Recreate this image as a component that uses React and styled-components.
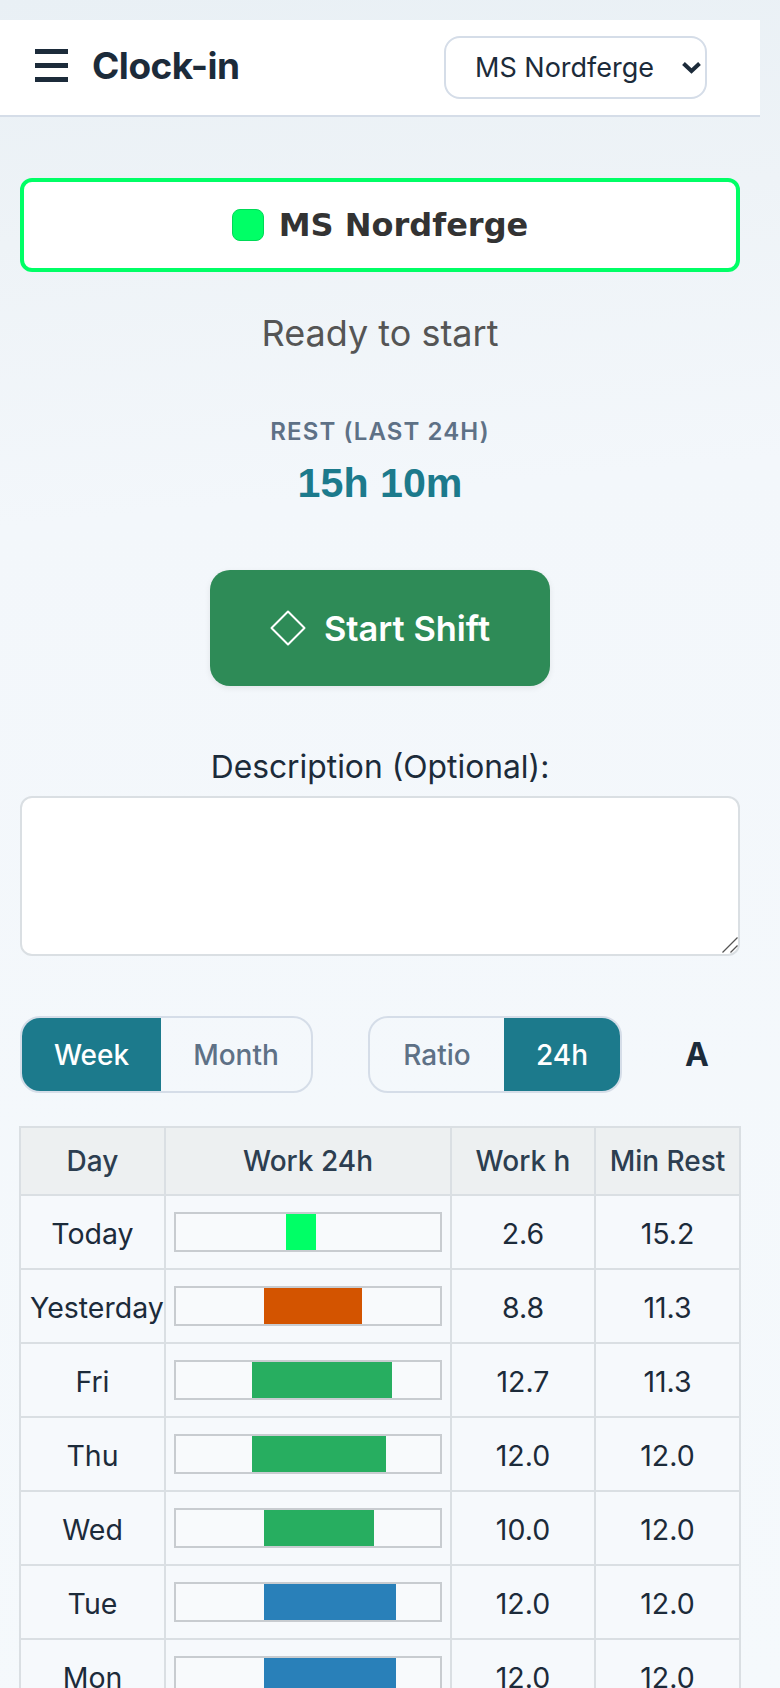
import styled, { createGlobalStyle } from "styled-components";

const GlobalStyle = createGlobalStyle`
  * { box-sizing: border-box; }
  html, body { margin: 0; padding: 0; }
  body {
    height: 1688px;
    overflow: hidden;
    font-family: Inter, "Noto Sans", sans-serif;
    color: #1c2b3a;
    background: linear-gradient(175deg, #e9f0f5 0%, #eef3f7 14%, #f3f7fb 30%, #f5f9fc 100%);
  }
`;

const Page = styled.div`
  width: 760px;
  height: 1688px;
  padding-top: 20px;
  overflow: hidden;
`;

const Header = styled.header`
  height: 97px;
  display: flex;
  align-items: center;
  justify-content: space-between;
  padding: 0 53px 0 35px;
  background: #fff;
  border-bottom: 2px solid #d5dde8;
`;

const Brand = styled.div`
  display: flex;
  align-items: center;
  gap: 24px;
  margin-bottom: 4px;
`;

const Burger = styled.span`
  width: 33px;
  height: 33px;
  display: flex;
  flex-direction: column;
  justify-content: space-between;
  span {
    height: 5px;
    background: #1c2b3a;
  }
`;

const Title = styled.h1`
  margin: 0;
  font-size: 37px;
  font-weight: 700;
  letter-spacing: -0.5px;
  color: #1c2b3a;
`;

const SelectWrap = styled.div`
  position: relative;
  svg {
    position: absolute;
    top: 26px;
    right: 6px;
    pointer-events: none;
  }
`;

const ShipSelect = styled.select`
  display: block;
  appearance: none;
  width: 263px;
  height: 63px;
  padding: 0 40px 0 29px;
  font-family: inherit;
  font-size: 27px;
  color: #1c2b3a;
  background: #fff;
  border: 2px solid #d5dde8;
  border-radius: 16px;
`;

const Main = styled.main`
  padding: 61px 20px 0;
  display: flex;
  flex-direction: column;
  align-items: center;
`;

const StatusBox = styled.div`
  width: 100%;
  height: 94px;
  display: flex;
  align-items: center;
  justify-content: center;
  gap: 15px;
  background: #fff;
  border: 4px solid #00ff66;
  border-radius: 12px;
  font-family: "DejaVu Sans", sans-serif;
  font-size: 32px;
  font-weight: 700;
  color: #333;
`;

const Dot = styled.span`
  width: 32px;
  height: 32px;
  background: #00ff66;
  border: 1px solid #00d957;
  border-radius: 8px;
`;

const StatusText = styled.p`
  margin: 36px 0 0;
  font-size: 36px;
  line-height: 50px;
  color: #555;
`;

const RestLabel = styled.div`
  margin-top: 59px;
  font-size: 24px;
  line-height: 30px;
  font-weight: 600;
  letter-spacing: 1.1px;
  color: #5e7186;
`;

const RestValue = styled.div`
  margin-top: 12px;
  font-family: "Liberation Sans", Arial, sans-serif;
  font-size: 41.2px;
  line-height: 48px;
  font-weight: 700;
  color: #1c7a8c;
`;

const StartButton = styled.button`
  margin-top: 63px;
  width: 340px;
  height: 116px;
  display: flex;
  align-items: center;
  justify-content: center;
  gap: 18px;
  font-family: inherit;
  font-size: 34.4px;
  font-weight: 600;
  color: #fff;
  background: #2e8b57;
  border: 0;
  border-radius: 20px;
  box-shadow: 0 2px 6px rgba(0, 0, 0, 0.08);
`;

const FieldLabel = styled.label`
  margin-top: 60px;
  font-size: 31.8px;
  line-height: 42px;
  color: #1c2b3a;
`;

const DescriptionWrap = styled.div`
  position: relative;
  width: 100%;
  margin-top: 8px;
  svg {
    position: absolute;
    right: 2px;
    bottom: 3px;
    pointer-events: none;
  }
`;

const Description = styled.textarea`
  display: block;
  width: 100%;
  height: 160px;
  resize: none;
  background: #fff;
  border: 2px solid #dadfe3;
  border-radius: 12px;
`;

const Controls = styled.div`
  width: 100%;
  margin-top: 60px;
  display: flex;
  align-items: center;
`;

const Toggle = styled.div`
  display: flex;
  height: 77px;
  margin-right: ${(p) => p.$gap || 0}px;
  border: 2px solid #d5dde8;
  border-radius: 20px;
  overflow: hidden;
`;

const ToggleButton = styled.button`
  width: ${(p) => p.$width}px;
  font-family: inherit;
  font-size: 28px;
  font-weight: 500;
  border: 0;
  color: ${(p) => (p.$active ? "#fff" : "#5e7186")};
  background: ${(p) => (p.$active ? "#1c7a8c" : "transparent")};
`;

const FontButton = styled.button`
  margin-left: 63px;
  padding: 0;
  border: 0;
  background: none;
  font-family: inherit;
  font-size: 32px;
  font-weight: 700;
  color: #1c2b3a;
`;

const Table = styled.table`
  width: 100%;
  margin-top: 33px;
  border-collapse: collapse;
  table-layout: fixed;
  font-size: 28.5px;
  color: #1c2b3a;
`;

const HeadCell = styled.th`
  height: 68px;
  padding: 0;
  font-size: 28px;
  font-weight: 500;
  color: #2c3e50;
  background: #edf0f1;
  border: 2px solid #dadfe3;
`;

const Cell = styled.td`
  height: 74px;
  padding: 2px 9px 0;
  text-align: center;
  white-space: nowrap;
  background: #f6f9fc;
  border: 2px solid #dadfe3;
`;

const BarCell = styled(Cell)`
  padding: 0 8px;
`;

const Bar = styled.div`
  position: relative;
  height: 40px;
  background: #f8fafc;
  border: 2px solid #c8ccd0;
`;

const BarFill = styled.div`
  position: absolute;
  top: 0;
  bottom: 0;
  background: ${(p) => p.$color};
`;

const days = [
  { day: "Today", start: 10, span: 2.75, work: "2.6", rest: "15.2", color: "#00ff66" },
  { day: "Yesterday", start: 8, span: 8.9, work: "8.8", rest: "11.3", color: "#d35400" },
  { day: "Fri", start: 6.9, span: 12.7, work: "12.7", rest: "11.3", color: "#27ae60" },
  { day: "Thu", start: 6.9, span: 12.15, work: "12.0", rest: "12.0", color: "#27ae60" },
  { day: "Wed", start: 8, span: 10, work: "10.0", rest: "12.0", color: "#27ae60" },
  { day: "Tue", start: 8, span: 12, work: "12.0", rest: "12.0", color: "#2980b9" },
  { day: "Mon", start: 8, span: 12, work: "12.0", rest: "12.0", color: "#2980b9" },
];

const App = () => {
  return (
    <Page>
      <GlobalStyle />
      <Header>
        <Brand>
          <Burger>
            <span />
            <span />
            <span />
          </Burger>
          <Title>Clock-in</Title>
        </Brand>
        <SelectWrap>
          <ShipSelect defaultValue="MS Nordferge">
            <option>MS Nordferge</option>
          </ShipSelect>
          <svg width="19" height="12" viewBox="0 0 19 12" fill="none" stroke="#1c2b3a" strokeWidth="4">
            <path d="M1.5 1.5 L9.5 9 L17.5 1.5" />
          </svg>
        </SelectWrap>
      </Header>
      <Main>
        <StatusBox>
          <Dot />
          MS Nordferge
        </StatusBox>
        <StatusText>Ready to start</StatusText>
        <RestLabel>REST (LAST 24H)</RestLabel>
        <RestValue>15h 10m</RestValue>
        <StartButton>
          <svg width="36" height="36" viewBox="0 0 36 36" fill="none" stroke="#fff" strokeWidth="2" strokeLinejoin="round">
            <path d="M18 1.5 L34.5 18 L18 34.5 L1.5 18 Z" />
          </svg>
          Start Shift
        </StartButton>
        <FieldLabel htmlFor="desc">Description (Optional):</FieldLabel>
        <DescriptionWrap>
          <Description id="desc" />
          <svg width="16" height="16" viewBox="0 0 16 16" fill="none" stroke="#555" strokeWidth="1.3">
            <path d="M0.5 15.5 L15.5 0.5 M8.5 15.5 L15.5 8.5" />
          </svg>
        </DescriptionWrap>
        <Controls>
          <Toggle $gap={55}>
            <ToggleButton $active $width={139}>Week</ToggleButton>
            <ToggleButton $width={150}>Month</ToggleButton>
          </Toggle>
          <Toggle>
            <ToggleButton $width={134}>Ratio</ToggleButton>
            <ToggleButton $active $width={116}>24h</ToggleButton>
          </Toggle>
          <FontButton>A</FontButton>
        </Controls>
        <Table>
          <colgroup>
            <col width="145" />
            <col width="286" />
            <col width="144" />
            <col width="145" />
          </colgroup>
          <thead>
            <tr>
              <HeadCell>Day</HeadCell>
              <HeadCell>Work 24h</HeadCell>
              <HeadCell>Work h</HeadCell>
              <HeadCell>Min Rest</HeadCell>
            </tr>
          </thead>
          <tbody>
            {days.map((d) => (
              <tr key={d.day}>
                <Cell>{d.day}</Cell>
                <BarCell>
                  <Bar>
                    <BarFill
                      $color={d.color}
                      style={{ left: `${(d.start / 24) * 100}%`, width: `${(d.span / 24) * 100}%` }}
                    />
                  </Bar>
                </BarCell>
                <Cell>{d.work}</Cell>
                <Cell>{d.rest}</Cell>
              </tr>
            ))}
          </tbody>
        </Table>
      </Main>
    </Page>
  );
};

export default App;
